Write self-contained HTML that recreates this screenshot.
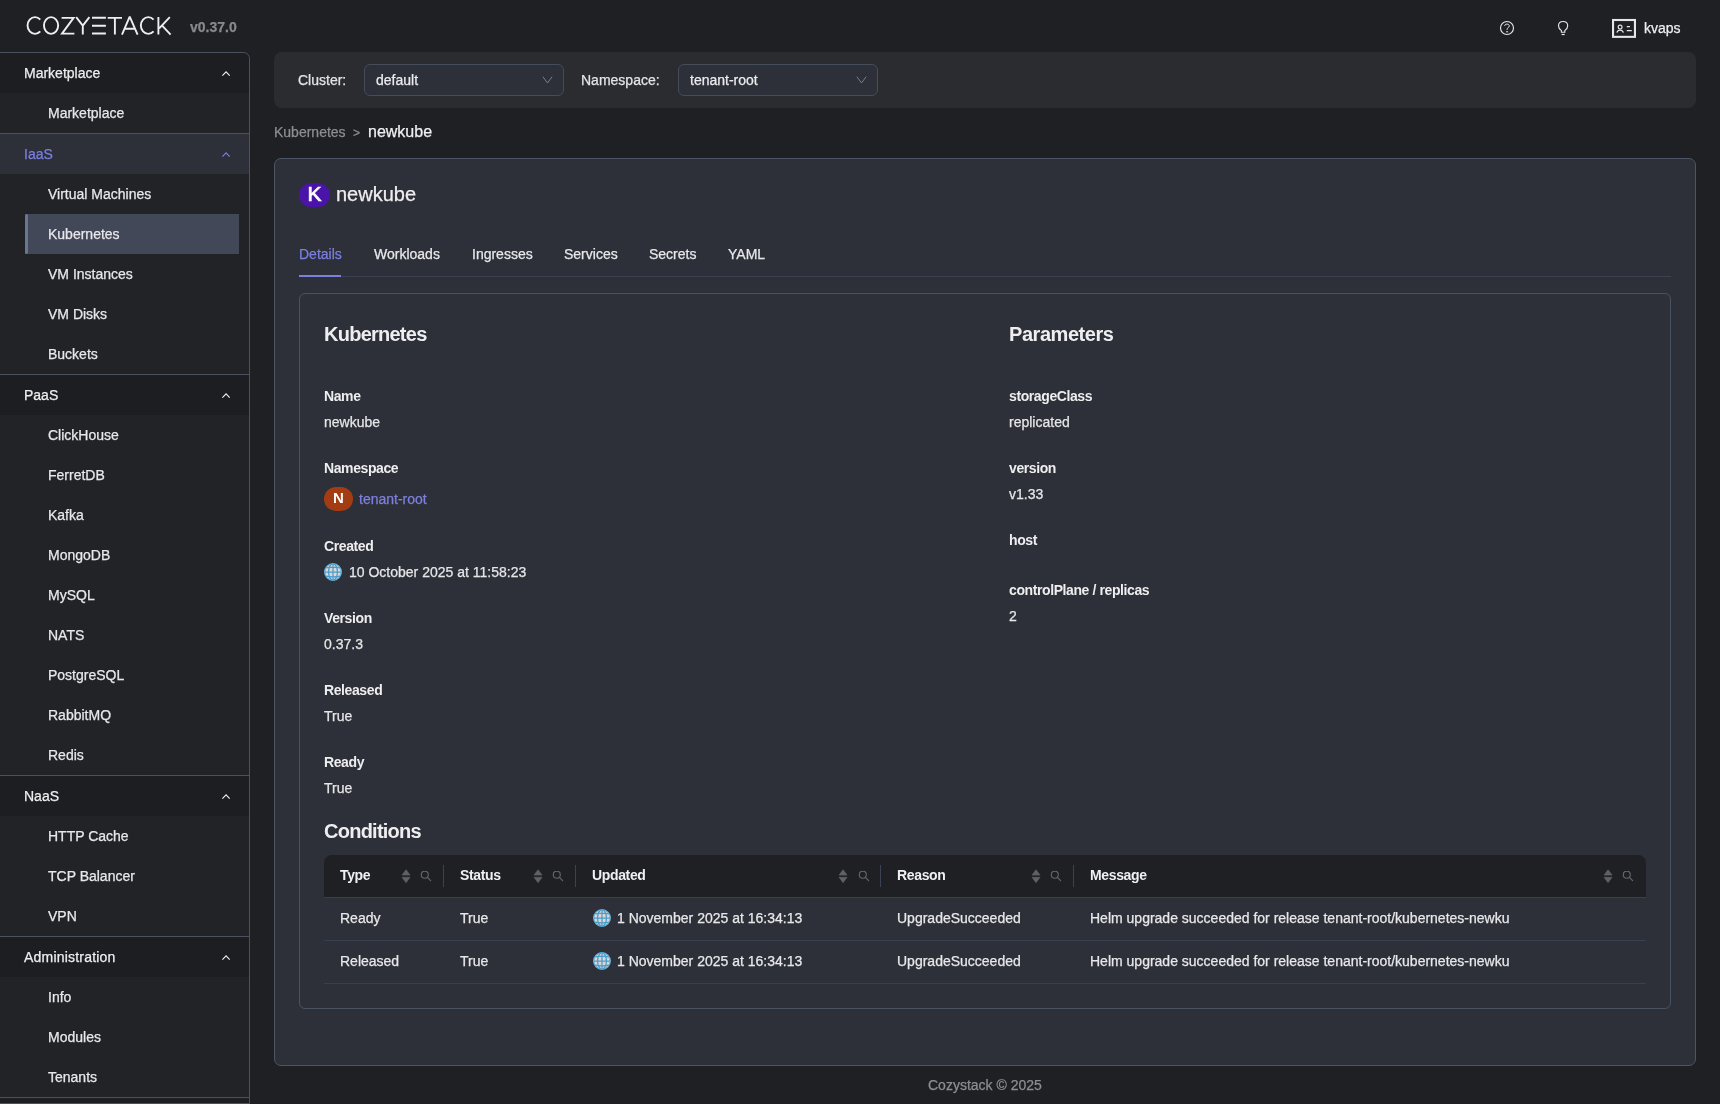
<!DOCTYPE html>
<html><head><meta charset="utf-8">
<style>
*{box-sizing:border-box;margin:0;padding:0}
html,body{width:1720px;height:1104px;overflow:hidden;background:#1f2024;font-family:"Liberation Sans",sans-serif;color:#e8e8ea;font-size:14px}
.abs{position:absolute}
/* header */
#logo{position:absolute;left:0;top:0}
#ver{position:absolute;left:190px;top:18px;font-weight:bold;font-size:14px;color:#88898d;line-height:18px}
/* sidebar */
#side{position:absolute;left:0;top:52px;width:250px;height:1060px;border:1px solid #4a5260;border-left:none;border-top-right-radius:7px;background:#222327;overflow:hidden}
.gh{height:40px;line-height:40px;padding-left:24px;background:#1d1e21;position:relative;color:#eeeef0}
.gh.act{background:#2d3039;color:#7b7fe0}
.gh svg{position:absolute;left:222px;top:17px}
.it{height:40px;line-height:40px;padding-left:48px;color:#e8e8ea;position:relative}
.it.act{margin-left:25px;width:214px;padding-left:23px;background:#434859}
.it.act:before{content:"";position:absolute;left:0;top:0;width:3.3px;height:40px;border-radius:1.6px;background:#66778f}
.sep{height:1px;background:#4a5260}
/* filter */
#filter{position:absolute;left:274px;top:52px;width:1422px;height:56px;background:#2b2c30;border-radius:8px}
.lbl{position:absolute;top:0;line-height:56px;color:#e4e4e6}
.sel{position:absolute;top:12px;width:200px;height:32px;border:1px solid #454c5a;border-radius:6px;background:#2d3039;line-height:30px;padding-left:11px;color:#ececee}
.sel svg{position:absolute;right:10px;top:11px}
/* breadcrumb */
#bc1{position:absolute;left:274px;top:121px;line-height:22px;color:#8d8e92}
#bc2{position:absolute;left:353px;top:122px;line-height:22px;font-size:12px;color:#8d8e92}
#bc3{position:absolute;left:368px;top:120px;line-height:24px;font-size:16px;color:#f0f0f2}
/* card */
#card{position:absolute;left:274px;top:158px;width:1422px;height:908px;background:#2d3038;border:1px solid #4d5666;border-radius:7px}
#avK{position:absolute;left:299px;top:183px;width:31px;height:24px;border-radius:12px;background:#4a14a8;color:#fff;font-size:21px;text-align:center;line-height:22px;-webkit-text-stroke-width:0.7px}
#title{position:absolute;left:336px;top:180px;font-size:20px;line-height:28px;color:#eeeef0}
.tab{position:absolute;top:243px;line-height:22px;color:#e8e8ea}
#tabline{position:absolute;left:299px;top:276px;width:1372px;height:1px;background:#3a4150}
#tabul{position:absolute;left:299px;top:275px;width:42px;height:2px;background:#7b7fe0}
#panel{position:absolute;left:299px;top:293px;width:1372px;height:716px;border:1px solid #4a5262;border-radius:6px}
.h2{position:absolute;font-size:20px;font-weight:bold;line-height:28px;color:#eeeef0;letter-spacing:-0.75px;-webkit-text-stroke-width:0}
.fl{position:absolute;font-weight:bold;line-height:22px;color:#eeeef0;letter-spacing:-0.4px;-webkit-text-stroke-width:0}
.fv{position:absolute;line-height:22px;color:#e6e6e8}
/* table */
#thead{position:absolute;left:324px;top:855px;width:1322px;height:42px;background:#1f2024;border-top-left-radius:8px;border-top-right-radius:8px}
.th{position:absolute;top:-1px;line-height:42px;font-weight:bold;color:#f0f0f2;letter-spacing:-0.35px;-webkit-text-stroke-width:0}
.dv{position:absolute;top:10px;width:1px;height:22px;background:#3a4356}
.rb{position:absolute;left:324px;width:1322px;height:1px;background:#364051}
.td{position:absolute;line-height:22px;color:#e8e8ea}
#foot{position:absolute;left:928px;top:1074px;line-height:22px;color:#8d8e92}
.srt{position:absolute;top:14px;width:10px;height:15px;line-height:0}
.srch{position:absolute;top:16px;width:13px;height:13px;line-height:0}
.globe{width:18px;height:18px}
#root{position:absolute;left:0;top:0;width:1720px;height:1104px;will-change:transform;-webkit-text-stroke-width:0.25px}
</style></head><body><div id="root">
<!-- logo -->
<svg id="logo" width="180" height="50" viewBox="0 0 180 50">
<g fill="none" stroke="#eeeef0" stroke-width="1.9">
<path d="M40.27 19.56A7.45 8.4 0 1 0 40.27 31.44"/>
<path d="M51.05 17.1A7.1 8.4 0 1 0 51.05 33.9A7.1 8.4 0 1 0 51.05 17.1Z"/>
<path d="M61.6 17.85H73.6L62 33.65H74.4"/>
<path d="M76.2 17.1L82.8 25.6L89.4 17.1M82.8 25.6V34.6"/>
<path d="M92 17.8H105.9M92 25.7H105.9M92 33.55H105.9"/>
<path d="M107.7 17.85H122M114.9 17.85V34.6"/>
<path d="M122 34.6L129.7 16.6L137.6 34.6M124.6 28.8H134.8" stroke-linejoin="bevel"/>
<path d="M153.57 19.56A7.45 8.4 0 1 0 153.57 31.44"/>
<path d="M158.4 16.9V34.6M169.8 17.1L159.2 28.3M161.9 25.45L170.6 34.6"/>
</g>
</svg>
<div id="ver">v0.37.0</div>
<svg class="abs" style="left:1490px;top:10px" width="200" height="36" viewBox="1490 10 200 36">
<g fill="none" stroke="#e6e6e8" stroke-width="1.15">
<circle cx="1507" cy="28" r="6.5"/>
<path d="M1504.7 26C1504.7 24.7 1505.7 24.1 1507 24.1C1508.3 24.1 1509.3 24.9 1509.3 26C1509.3 27.5 1507.1 27.6 1507.1 29.3V29.9" stroke-width="1"/>
<path d="M1506 31.8H1508.1" stroke-width="1"/>
<path d="M1561.4 32.2V30.6C1559.7 29.4 1558.5 27.7 1558.5 25.7C1558.5 23.1 1560.6 21.5 1563.1 21.5C1565.6 21.5 1567.7 23.1 1567.7 25.7C1567.7 27.7 1566.5 29.4 1564.8 30.6V32.2Z"/>
<path d="M1561.6 34.5H1564.7" stroke-width="1.2"/>
<rect x="1613.05" y="20" width="21.9" height="16.85" stroke-width="2.1"/>
<circle cx="1620.1" cy="27.1" r="1.95" stroke-width="1.15"/>
<path d="M1616.9 32.6C1617.3 31.1 1618.5 30.1 1620.1 30.1C1621.7 30.1 1622.9 31.1 1623.4 32.6" stroke-width="1.2"/>
<path d="M1626.8 26.6H1629.9M1626.8 30.6H1631.8" stroke-width="1.3"/>
</g>
</svg>
<div class="abs" style="left:1644px;top:17px;line-height:22px;color:#ededef">kvaps</div>


<!-- sidebar -->
<div id="side">
  <div class="gh">Marketplace<svg width="9" height="7" viewBox="0 0 9 7"><path d="M0.4 5.6L4.05 1.95L7.7 5.6" fill="none" stroke="#eeeef0" stroke-width="1.2"/></svg></div>
  <div class="it">Marketplace</div>
  <div class="sep"></div>
  <div class="gh act">IaaS<svg width="9" height="7" viewBox="0 0 9 7"><path d="M0.4 5.6L4.05 1.95L7.7 5.6" fill="none" stroke="#7b7fe0" stroke-width="1.2"/></svg></div>
  <div class="it">Virtual Machines</div>
  <div class="it act">Kubernetes</div>
  <div class="it">VM Instances</div>
  <div class="it">VM Disks</div>
  <div class="it">Buckets</div>
  <div class="sep"></div>
  <div class="gh">PaaS<svg width="9" height="7" viewBox="0 0 9 7"><path d="M0.4 5.6L4.05 1.95L7.7 5.6" fill="none" stroke="#eeeef0" stroke-width="1.2"/></svg></div>
  <div class="it">ClickHouse</div>
  <div class="it">FerretDB</div>
  <div class="it">Kafka</div>
  <div class="it">MongoDB</div>
  <div class="it">MySQL</div>
  <div class="it">NATS</div>
  <div class="it">PostgreSQL</div>
  <div class="it">RabbitMQ</div>
  <div class="it">Redis</div>
  <div class="sep"></div>
  <div class="gh">NaaS<svg width="9" height="7" viewBox="0 0 9 7"><path d="M0.4 5.6L4.05 1.95L7.7 5.6" fill="none" stroke="#eeeef0" stroke-width="1.2"/></svg></div>
  <div class="it">HTTP Cache</div>
  <div class="it">TCP Balancer</div>
  <div class="it">VPN</div>
  <div class="sep"></div>
  <div class="gh"><span style="letter-spacing:0.2px">Administration</span><svg width="9" height="7" viewBox="0 0 9 7"><path d="M0.4 5.6L4.05 1.95L7.7 5.6" fill="none" stroke="#eeeef0" stroke-width="1.2"/></svg></div>
  <div class="it">Info</div>
  <div class="it">Modules</div>
  <div class="it">Tenants</div>
  <div class="sep"></div>
  <div class="gh" style="height:5px"></div>
  <div class="sep"></div>
</div>

<!-- filter -->
<div id="filter">
  <div class="lbl" style="left:24px">Cluster:</div>
  <div class="sel" style="left:90px">default<svg width="11" height="8" viewBox="0 0 11 8"><path d="M0.9 0.7L5.5 7L10.1 0.7" fill="none" stroke="#7a7d85" stroke-width="1"/></svg></div>
  <div class="lbl" style="left:307px">Namespace:</div>
  <div class="sel" style="left:404px">tenant-root<svg width="11" height="8" viewBox="0 0 11 8"><path d="M0.9 0.7L5.5 7L10.1 0.7" fill="none" stroke="#7a7d85" stroke-width="1"/></svg></div>
</div>

<div id="bc1">Kubernetes</div>
<div id="bc2">&gt;</div>
<div id="bc3">newkube</div>

<div id="card"></div>
<div id="avK">K</div>
<div id="title">newkube</div>
<div class="tab" style="left:299px;color:#7b7fe0">Details</div>
<div class="tab" style="left:374px">Workloads</div>
<div class="tab" style="left:472px">Ingresses</div>
<div class="tab" style="left:564px">Services</div>
<div class="tab" style="left:649px">Secrets</div>
<div class="tab" style="left:728px">YAML</div>
<div id="tabline"></div>
<div id="tabul"></div>
<div id="panel"></div>

<!-- details -->
<div class="h2" style="left:324px;top:320px">Kubernetes</div>
<div class="h2" style="left:1009px;top:320px;letter-spacing:-0.45px">Parameters</div>

<div class="fl" style="left:324px;top:385px">Name</div>
<div class="fv" style="left:324px;top:411px">newkube</div>
<div class="fl" style="left:324px;top:457px">Namespace</div>
<div id="avN" class="abs" style="left:324px;top:487px;width:29px;height:24px;border-radius:12px;background:#a33c12;color:#fff;text-align:center;line-height:22px;font-size:15px;font-weight:bold;-webkit-text-stroke-width:0">N</div>
<div class="fv" style="left:359px;top:488px;color:#7d80dc">tenant-root</div>
<div class="fl" style="left:324px;top:535px">Created</div>
<div class="globe abs" style="left:324px;top:563px"><svg width="18" height="18" viewBox="0 0 18 18"><circle cx="9" cy="9" r="8.3" fill="#dcd6d6" stroke="#62b5df" stroke-width="1.3"/><g fill="none" stroke="#4a9dcb" stroke-width="1.25"><ellipse cx="9" cy="9" rx="4.4" ry="8.3"/><path d="M9 0.7V17.3M1 9H17M2.2 4.9Q9 3.2 15.8 4.9M2.2 13.1Q9 14.8 15.8 13.1"/></g></svg></div>
<div class="fv" style="left:349px;top:561px">10 October 2025 at 11:58:23</div>
<div class="fl" style="left:324px;top:607px">Version</div>
<div class="fv" style="left:324px;top:633px">0.37.3</div>
<div class="fl" style="left:324px;top:679px">Released</div>
<div class="fv" style="left:324px;top:705px">True</div>
<div class="fl" style="left:324px;top:751px">Ready</div>
<div class="fv" style="left:324px;top:777px">True</div>

<div class="fl" style="left:1009px;top:385px">storageClass</div>
<div class="fv" style="left:1009px;top:411px">replicated</div>
<div class="fl" style="left:1009px;top:457px">version</div>
<div class="fv" style="left:1009px;top:483px">v1.33</div>
<div class="fl" style="left:1009px;top:529px">host</div>
<div class="fl" style="left:1009px;top:579px">controlPlane / replicas</div>
<div class="fv" style="left:1009px;top:605px">2</div>

<div class="h2" style="left:324px;top:817px">Conditions</div>

<!-- table -->
<div id="thead">
  <div class="th" style="left:16px">Type</div>
  <div class="srt" style="left:77px"><svg width="10" height="15" viewBox="0 0 10 15"><path d="M1 6.1L5.05 0.7L9.1 6.1Z M1 8.3H9.1L5.05 13.7Z" fill="#5f6166" stroke="#5f6166" stroke-width="0.6" stroke-linejoin="round"/></svg></div><div class="srch" style="left:96px"><svg width="13" height="13" viewBox="0 0 13 13"><circle cx="4.8" cy="3.7" r="3.5" fill="none" stroke="#63666c" stroke-width="1.15"/><path d="M7.4 6.4L10.6 9.6" stroke="#63666c" stroke-width="1.2" stroke-linecap="round"/></svg></div>
  <div class="dv" style="left:119px"></div>
  <div class="th" style="left:136px">Status</div>
  <div class="srt" style="left:209px"><svg width="10" height="15" viewBox="0 0 10 15"><path d="M1 6.1L5.05 0.7L9.1 6.1Z M1 8.3H9.1L5.05 13.7Z" fill="#5f6166" stroke="#5f6166" stroke-width="0.6" stroke-linejoin="round"/></svg></div><div class="srch" style="left:228px"><svg width="13" height="13" viewBox="0 0 13 13"><circle cx="4.8" cy="3.7" r="3.5" fill="none" stroke="#63666c" stroke-width="1.15"/><path d="M7.4 6.4L10.6 9.6" stroke="#63666c" stroke-width="1.2" stroke-linecap="round"/></svg></div>
  <div class="dv" style="left:251px"></div>
  <div class="th" style="left:268px">Updated</div>
  <div class="srt" style="left:514px"><svg width="10" height="15" viewBox="0 0 10 15"><path d="M1 6.1L5.05 0.7L9.1 6.1Z M1 8.3H9.1L5.05 13.7Z" fill="#5f6166" stroke="#5f6166" stroke-width="0.6" stroke-linejoin="round"/></svg></div><div class="srch" style="left:534px"><svg width="13" height="13" viewBox="0 0 13 13"><circle cx="4.8" cy="3.7" r="3.5" fill="none" stroke="#63666c" stroke-width="1.15"/><path d="M7.4 6.4L10.6 9.6" stroke="#63666c" stroke-width="1.2" stroke-linecap="round"/></svg></div>
  <div class="dv" style="left:556px"></div>
  <div class="th" style="left:573px">Reason</div>
  <div class="srt" style="left:707px"><svg width="10" height="15" viewBox="0 0 10 15"><path d="M1 6.1L5.05 0.7L9.1 6.1Z M1 8.3H9.1L5.05 13.7Z" fill="#5f6166" stroke="#5f6166" stroke-width="0.6" stroke-linejoin="round"/></svg></div><div class="srch" style="left:726px"><svg width="13" height="13" viewBox="0 0 13 13"><circle cx="4.8" cy="3.7" r="3.5" fill="none" stroke="#63666c" stroke-width="1.15"/><path d="M7.4 6.4L10.6 9.6" stroke="#63666c" stroke-width="1.2" stroke-linecap="round"/></svg></div>
  <div class="dv" style="left:749px"></div>
  <div class="th" style="left:766px">Message</div>
  <div class="srt" style="left:1279px"><svg width="10" height="15" viewBox="0 0 10 15"><path d="M1 6.1L5.05 0.7L9.1 6.1Z M1 8.3H9.1L5.05 13.7Z" fill="#5f6166" stroke="#5f6166" stroke-width="0.6" stroke-linejoin="round"/></svg></div><div class="srch" style="left:1298px"><svg width="13" height="13" viewBox="0 0 13 13"><circle cx="4.8" cy="3.7" r="3.5" fill="none" stroke="#63666c" stroke-width="1.15"/><path d="M7.4 6.4L10.6 9.6" stroke="#63666c" stroke-width="1.2" stroke-linecap="round"/></svg></div>
</div>
<div class="rb" style="top:897px"></div>
<div class="td" style="left:340px;top:907px">Ready</div>
<div class="td" style="left:460px;top:907px">True</div>
<div class="globe abs" style="left:593px;top:909px"><svg width="18" height="18" viewBox="0 0 18 18"><circle cx="9" cy="9" r="8.3" fill="#dcd6d6" stroke="#62b5df" stroke-width="1.3"/><g fill="none" stroke="#4a9dcb" stroke-width="1.25"><ellipse cx="9" cy="9" rx="4.4" ry="8.3"/><path d="M9 0.7V17.3M1 9H17M2.2 4.9Q9 3.2 15.8 4.9M2.2 13.1Q9 14.8 15.8 13.1"/></g></svg></div>
<div class="td" style="left:617px;top:907px">1 November 2025 at 16:34:13</div>
<div class="td" style="left:897px;top:907px">UpgradeSucceeded</div>
<div class="td" style="left:1090px;top:907px">Helm upgrade succeeded for release tenant-root/kubernetes-newku</div>
<div class="rb" style="top:940px"></div>
<div class="td" style="left:340px;top:950px">Released</div>
<div class="td" style="left:460px;top:950px">True</div>
<div class="globe abs" style="left:593px;top:952px"><svg width="18" height="18" viewBox="0 0 18 18"><circle cx="9" cy="9" r="8.3" fill="#dcd6d6" stroke="#62b5df" stroke-width="1.3"/><g fill="none" stroke="#4a9dcb" stroke-width="1.25"><ellipse cx="9" cy="9" rx="4.4" ry="8.3"/><path d="M9 0.7V17.3M1 9H17M2.2 4.9Q9 3.2 15.8 4.9M2.2 13.1Q9 14.8 15.8 13.1"/></g></svg></div>
<div class="td" style="left:617px;top:950px">1 November 2025 at 16:34:13</div>
<div class="td" style="left:897px;top:950px">UpgradeSucceeded</div>
<div class="td" style="left:1090px;top:950px">Helm upgrade succeeded for release tenant-root/kubernetes-newku</div>
<div class="rb" style="top:983px"></div>

<div id="foot">Cozystack &copy; 2025</div>

</div></body></html>
